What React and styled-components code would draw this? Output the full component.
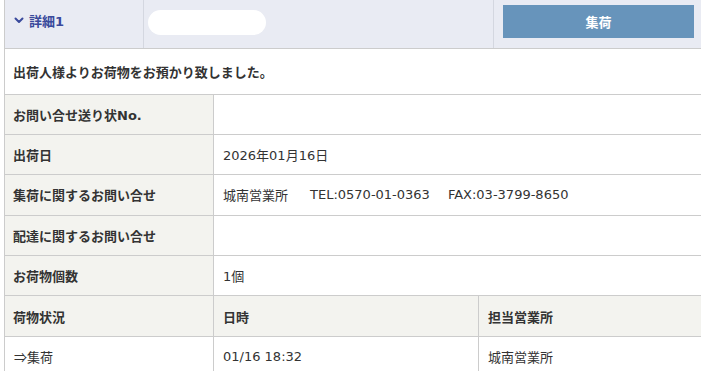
import React from "react"
import styled, { createGlobalStyle } from "styled-components"

const GlobalStyle = createGlobalStyle`
  html, body {
    margin: 0;
    padding: 0;
    overflow: hidden;
    background: #ffffff;
  }
  body {
    font-family: "DejaVu Sans", "Noto Sans CJK JP", sans-serif;
    font-size: 13px;
    color: #333333;
  }
`

const Panel = styled.div`
  margin-left: 4px;
  width: 700px;
  border-left: 1px solid #cccccc;
`

const Header = styled.div`
  display: grid;
  grid-template-columns: 139px 350px 1fr;
  height: 48px;
  background: #e9ebf3;
  border-bottom: 1px solid #cccccc;
`

const HeaderCell = styled.div`
  display: flex;
  align-items: flex-start;
  border-right: ${({ last }) => (last ? "none" : "1px solid #d4d7e0")};
  padding: ${({ last }) => (last ? "5px 0 0 9px" : "0 0 0 9px")};
`

const Toggle = styled.div`
  display: flex;
  align-items: center;
  gap: 5px;
  height: 40px;
  color: #3a4a9c;
  font-weight: bold;
  cursor: pointer;
`

const Masked = styled.div`
  margin-top: 10px;
  margin-left: -5px;
  width: 118px;
  height: 25px;
  border-radius: 13px;
  background: #ffffff;
`

const ActionButton = styled.button`
  width: 191px;
  height: 33px;
  border: none;
  background: #6794bb;
  color: #ffffff;
  font-family: inherit;
  font-size: 13px;
  font-weight: bold;
  cursor: pointer;
`

const Notice = styled.div`
  display: flex;
  align-items: center;
  height: 45.5px;
  padding-left: 8px;
  padding-top: 1px;
  box-sizing: border-box;
  font-weight: bold;
  border-bottom: 1px solid #cccccc;
`

const Row = styled.div`
  display: grid;
  grid-template-columns: 209px 265px 1fr;
  min-height: 39.4px;
  border-bottom: 1px solid #cccccc;
  background: ${({ head }) => (head ? "#f3f3ef" : "#ffffff")};
`

const Cell = styled.div`
  display: flex;
  align-items: center;
  padding-left: 9px;
  grid-column: ${({ span }) => (span ? `span ${span}` : "auto")};
  border-right: ${({ last }) => (last ? "none" : "1px solid #cccccc")};
  font-weight: ${({ bold }) => (bold ? "bold" : "normal")};
  font-family: ${({ cjk }) =>
    cjk ? `"Noto Sans CJK JP", sans-serif` : "inherit"};
`

const Label = styled(Cell)`
  padding-left: 8px;
  background: #f3f3ef;
  font-weight: bold;
`

const Part = styled.span`
  margin-left: ${({ gap }) => gap || 0}px;
`

const Chevron = () => (
  <svg width="10" height="7" viewBox="0 0 10 7">
    <polyline
      points="1.5,1.5 5,5 8.5,1.5"
      fill="none"
      stroke="currentColor"
      strokeWidth="2"
      strokeLinecap="round"
      strokeLinejoin="round"
    />
  </svg>
)

const details = [
  { label: "お問い合せ送り状No.", value: "" },
  { label: "出荷日", value: "2026年01月16日" },
  {
    label: "集荷に関するお問い合せ",
    value: (
      <>
        <Part>城南営業所</Part>
        <Part gap={22}>TEL:0570-01-0363</Part>
        <Part gap={18}>FAX:03-3799-8650</Part>
      </>
    ),
  },
  { label: "配達に関するお問い合せ", value: "" },
  { label: "お荷物個数", value: "1個" },
]

const history = [{ status: "⇒集荷", time: "01/16 18:32", office: "城南営業所" }]

export default function App() {
  return (
    <>
      <GlobalStyle />
      <Panel>
        <Header>
          <HeaderCell>
            <Toggle>
              <Chevron />
              詳細1
            </Toggle>
          </HeaderCell>
          <HeaderCell>
            <Masked />
          </HeaderCell>
          <HeaderCell last>
            <ActionButton>集荷</ActionButton>
          </HeaderCell>
        </Header>

        <Notice>出荷人様よりお荷物をお預かり致しました。</Notice>

        {details.map((d) => (
          <Row key={d.label}>
            <Label>{d.label}</Label>
            <Cell span={2} last>
              {d.value}
            </Cell>
          </Row>
        ))}

        <Row head>
          <Label>荷物状況</Label>
          <Cell bold>日時</Cell>
          <Cell bold last>
            担当営業所
          </Cell>
        </Row>
        {history.map((h) => (
          <Row key={h.time}>
            <Cell cjk>{h.status}</Cell>
            <Cell>{h.time}</Cell>
            <Cell last>{h.office}</Cell>
          </Row>
        ))}
      </Panel>
    </>
  )
}
